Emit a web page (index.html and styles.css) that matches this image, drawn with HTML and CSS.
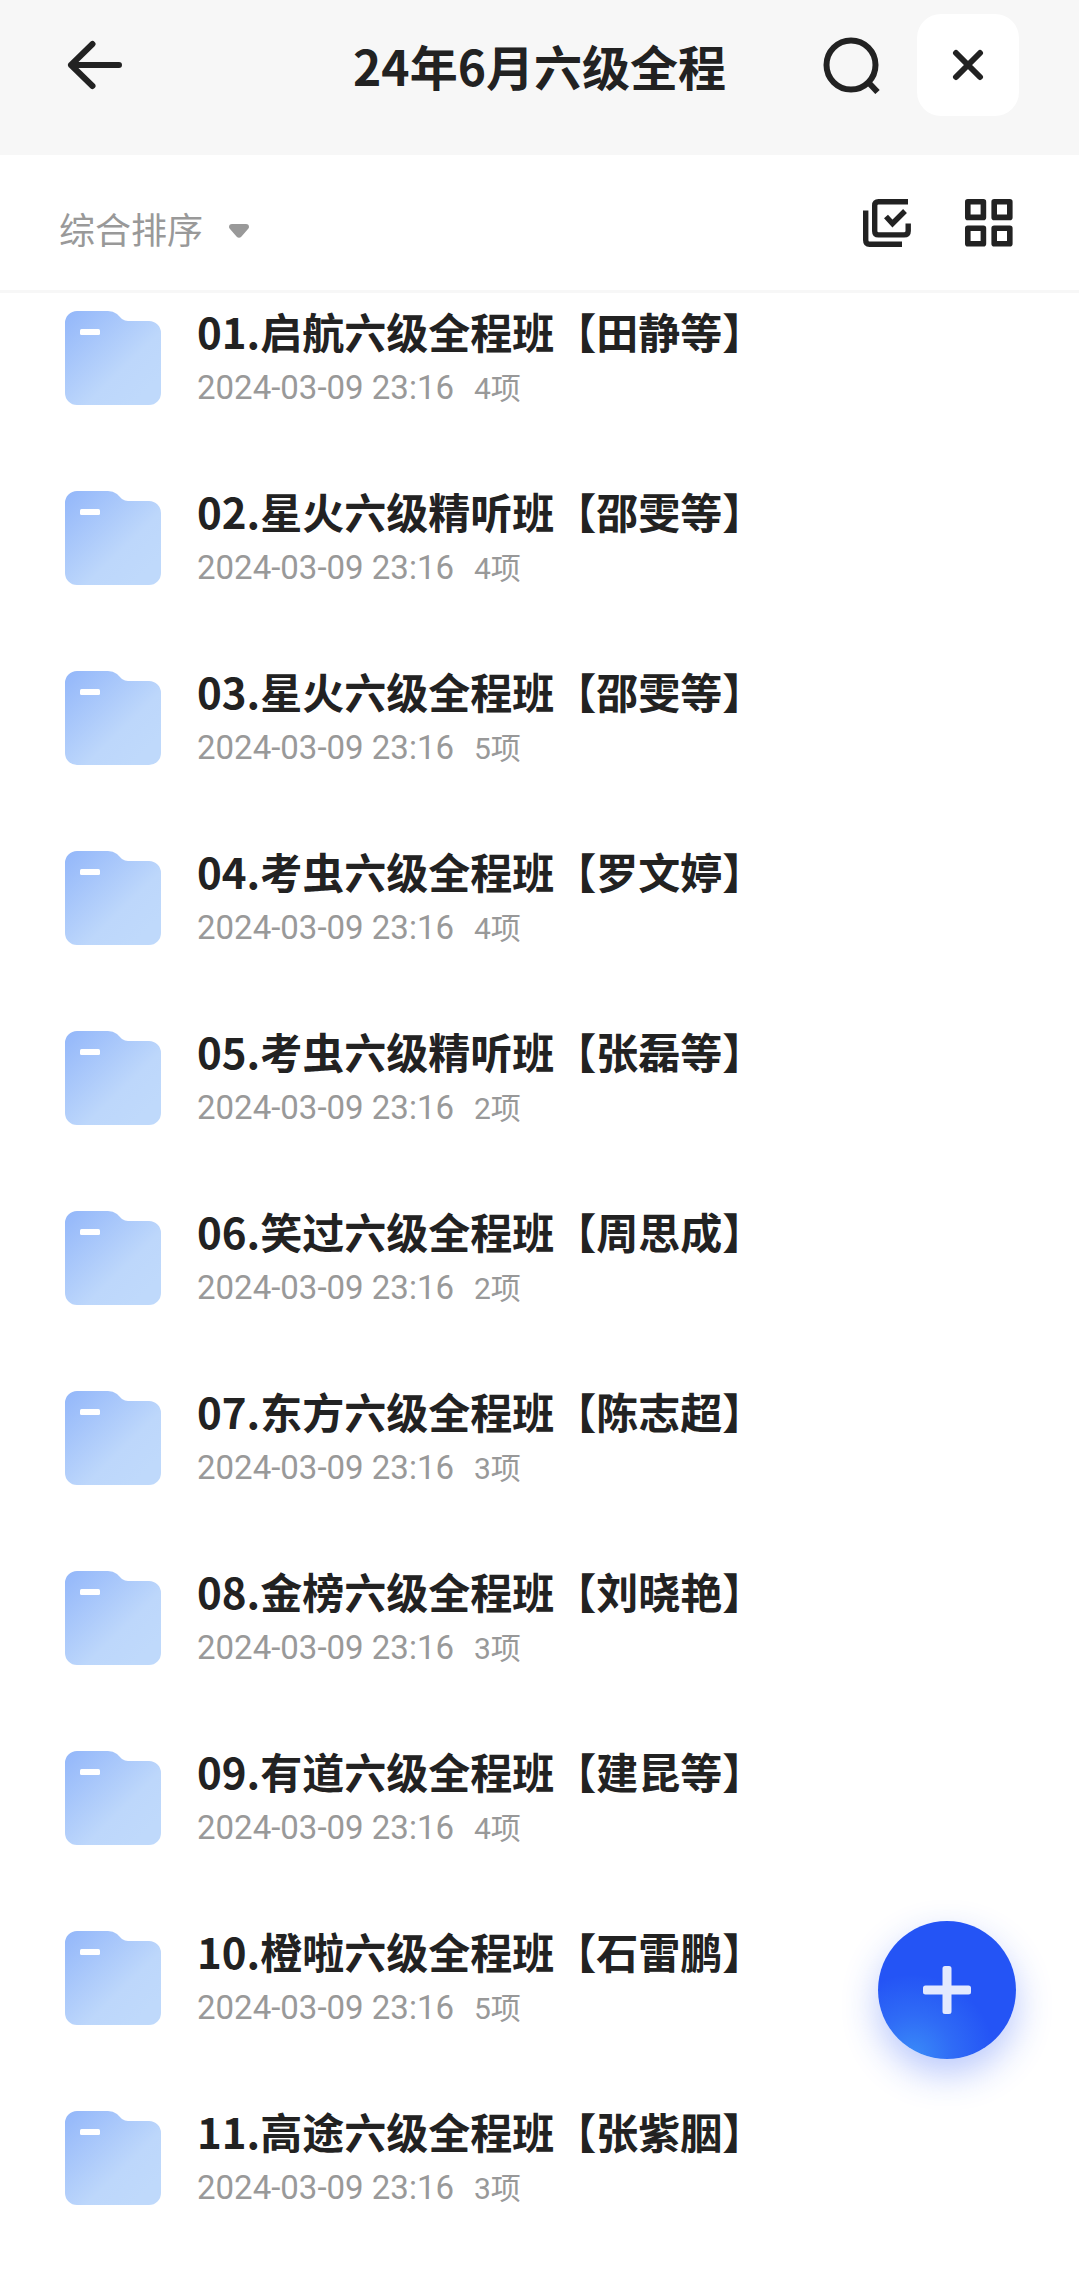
FILE: index.html
```html
<!DOCTYPE html>
<html lang="zh-CN">
<head>
    <meta charset="UTF-8">
    <meta name="viewport" content="width=device-width, initial-scale=1.0">
    <title>24年6月六级全程</title>
    <link rel="stylesheet" href="styles.css">
</head>
<body>
    <!-- folder icon shared by all rows -->
    <svg class="sprite" width="0" height="0" aria-hidden="true">
        <defs>
            <linearGradient id="folderFill" x1="0" y1="0.1" x2="0.8" y2="0.9">
                <stop offset="0" stop-color="#96b9fa"/>
                <stop offset="0.7" stop-color="#bdd7fb"/>
                <stop offset="1" stop-color="#bfd9fb"/>
            </linearGradient>
        </defs>
        <symbol id="folder" viewBox="0 0 96 94">
            <path fill="url(#folderFill)" d="M12 0H43Q48 0 52 3L57 8Q60 10 63 10H84A12 12 0 0 1 96 22V82A12 12 0 0 1 84 94H12A12 12 0 0 1 0 82V12A12 12 0 0 1 12 0Z"/>
            <rect x="15" y="18" width="20" height="6" rx="1.5" fill="#fff"/>
        </symbol>
    </svg>

    <header class="header">
        <button type="button" class="icon-button back-button" aria-label="返回">
            <svg width="56" height="50" viewBox="0 0 56 50" fill="none" stroke="#222" stroke-width="6" stroke-linecap="round" stroke-linejoin="round">
                <path d="M52 25H4M25.500 4L4 25L25.500 46"/>
            </svg>
        </button>
        <h1>24年6月六级全程</h1>
        <div class="header-actions">
            <button type="button" class="icon-button" aria-label="搜索">
                <svg width="58" height="58" viewBox="0 0 58 58" fill="none" stroke="#222" stroke-width="6">
                    <circle cx="28" cy="29" r="24.500"/>
                    <path d="M45 46L54.500 56"/>
                </svg>
            </button>
            <button type="button" class="icon-button close-button" aria-label="关闭">
                <svg width="32" height="32" viewBox="0 0 32 32" fill="none" stroke="#222" stroke-width="6" stroke-linecap="round">
                    <path d="M4 4L28 28M28 4L4 28"/>
                </svg>
            </button>
        </div>
    </header>

    <div class="toolbar">
        <label class="sort">
            <select name="sort" aria-label="排序方式">
                <option>综合排序</option>
            </select>
            <svg class="caret" width="20" height="14" viewBox="0 0 20 14" fill="#999">
                <path d="M3 0H17Q20 0 20 3Q20 4 19 5L12.500 12.500Q10 15 7.500 12.500L1 5Q0 4 0 3Q0 0 3 0Z"/>
            </svg>
        </label>
        <div class="toolbar-actions">
            <button type="button" class="icon-button" aria-label="多选">
                <svg width="48" height="48" viewBox="0 0 48 48" fill="none" stroke="#222" stroke-width="5.400">
                    <path d="M45 2.700H15.500Q11.700 2.700 11.700 6.500V32Q11.700 35.900 15.500 35.900H41Q45.200 35.900 45.200 32V24.500"/>
                    <path d="M2.700 11.500V41Q2.700 45.200 6.500 45.200H39"/>
                    <path d="M23 17.500L29.500 24.500L42 12"/>
                </svg>
            </button>
            <button type="button" class="icon-button" aria-label="网格视图">
                <svg width="48" height="48" viewBox="0 0 48 48" fill="none" stroke="#222" stroke-width="5.600" stroke-linejoin="round">
                    <rect x="2.800" y="2.800" width="15.600" height="15.600"/>
                    <rect x="29.200" y="2.800" width="15.600" height="15.600"/>
                    <rect x="2.800" y="29.200" width="15.600" height="15.600"/>
                    <rect x="29.200" y="29.200" width="15.600" height="15.600"/>
                </svg>
            </button>
        </div>
    </div>

    <main>
        <ul class="file-list">
            <li><a href="#" class="file-item">
                <svg class="folder-icon"><use href="#folder"/></svg>
                <div class="file-info">
                    <h2>01.启航六级全程班【田静等】</h2>
                    <p><span class="date">2024-03-09 23:16</span><span>4项</span></p>
                </div>
            </a></li>
            <li><a href="#" class="file-item">
                <svg class="folder-icon"><use href="#folder"/></svg>
                <div class="file-info">
                    <h2>02.星火六级精听班【邵雯等】</h2>
                    <p><span class="date">2024-03-09 23:16</span><span>4项</span></p>
                </div>
            </a></li>
            <li><a href="#" class="file-item">
                <svg class="folder-icon"><use href="#folder"/></svg>
                <div class="file-info">
                    <h2>03.星火六级全程班【邵雯等】</h2>
                    <p><span class="date">2024-03-09 23:16</span><span>5项</span></p>
                </div>
            </a></li>
            <li><a href="#" class="file-item">
                <svg class="folder-icon"><use href="#folder"/></svg>
                <div class="file-info">
                    <h2>04.考虫六级全程班【罗文婷】</h2>
                    <p><span class="date">2024-03-09 23:16</span><span>4项</span></p>
                </div>
            </a></li>
            <li><a href="#" class="file-item">
                <svg class="folder-icon"><use href="#folder"/></svg>
                <div class="file-info">
                    <h2>05.考虫六级精听班【张磊等】</h2>
                    <p><span class="date">2024-03-09 23:16</span><span>2项</span></p>
                </div>
            </a></li>
            <li><a href="#" class="file-item">
                <svg class="folder-icon"><use href="#folder"/></svg>
                <div class="file-info">
                    <h2>06.笑过六级全程班【周思成】</h2>
                    <p><span class="date">2024-03-09 23:16</span><span>2项</span></p>
                </div>
            </a></li>
            <li><a href="#" class="file-item">
                <svg class="folder-icon"><use href="#folder"/></svg>
                <div class="file-info">
                    <h2>07.东方六级全程班【陈志超】</h2>
                    <p><span class="date">2024-03-09 23:16</span><span>3项</span></p>
                </div>
            </a></li>
            <li><a href="#" class="file-item">
                <svg class="folder-icon"><use href="#folder"/></svg>
                <div class="file-info">
                    <h2>08.金榜六级全程班【刘晓艳】</h2>
                    <p><span class="date">2024-03-09 23:16</span><span>3项</span></p>
                </div>
            </a></li>
            <li><a href="#" class="file-item">
                <svg class="folder-icon"><use href="#folder"/></svg>
                <div class="file-info">
                    <h2>09.有道六级全程班【建昆等】</h2>
                    <p><span class="date">2024-03-09 23:16</span><span>4项</span></p>
                </div>
            </a></li>
            <li><a href="#" class="file-item">
                <svg class="folder-icon"><use href="#folder"/></svg>
                <div class="file-info">
                    <h2>10.橙啦六级全程班【石雷鹏】</h2>
                    <p><span class="date">2024-03-09 23:16</span><span>5项</span></p>
                </div>
            </a></li>
            <li><a href="#" class="file-item">
                <svg class="folder-icon"><use href="#folder"/></svg>
                <div class="file-info">
                    <h2>11.高途六级全程班【张紫胭】</h2>
                    <p><span class="date">2024-03-09 23:16</span><span>3项</span></p>
                </div>
            </a></li>
        </ul>
    </main>

    <button type="button" class="add-button" aria-label="新建">
        <svg width="48" height="48" viewBox="0 0 48 48" fill="#e3e9fe">
            <path d="M22 0H26Q28.500 0 28.500 2.500V19.500H45.500Q48 19.500 48 22V26Q48 28.500 45.500 28.500H28.500V45.500Q28.500 48 26 48H22Q19.500 48 19.500 45.500V28.500H2.500Q0 28.500 0 26V22Q0 19.500 2.500 19.500H19.500V2.500Q19.500 0 22 0Z"/>
        </svg>
    </button>
</body>
</html>
```

FILE: styles.css
```css
* {
    box-sizing: border-box;
}
body {
    margin: 0;
    background-color: #fff;
    color: #222;
    font-family: "Noto Sans CJK SC", sans-serif;
}
h1, h2, p, ul {
    margin: 0;
    padding: 0;
}
svg {
    display: block;
    flex-shrink: 0;
}
.sprite {
    position: absolute;
}
.icon-button {
    display: flex;
    align-items: center;
    justify-content: center;
    padding: 0;
    border: none;
    background: none;
    cursor: pointer;
}
.header {
    display: grid;
    grid-template-columns: 1fr auto 1fr;
    align-items: center;
    padding: 14px 60px 39px;
    background-color: #f7f7f7;
}
.header h1 {
    font-size: 48px;
    line-height: 64px;
    font-weight: 700;
}
.back-button {
    justify-self: start;
    padding-left: 7px;
}
.header-actions {
    display: flex;
    align-items: center;
    justify-content: flex-end;
    gap: 36px;
}
.close-button {
    width: 102px;
    height: 102px;
    border-radius: 24px;
    background-color: #fff;
}
.toolbar {
    display: flex;
    align-items: center;
    justify-content: space-between;
    padding: 36px 66px 35px 59px;
    border-bottom: 3px solid #f7f7f7;
}
.sort {
    display: flex;
    align-items: center;
    gap: 25px;
    padding-top: 10px;
}
.sort select {
    appearance: none;
    padding: 0;
    border: none;
    background: none;
    color: #999;
    font-family: inherit;
    font-size: 36px;
    line-height: 54px;
    cursor: pointer;
}
.caret {
    margin-top: 6px;
}
.toolbar-actions {
    display: flex;
    gap: 54px;
}
.file-list {
    display: flex;
    flex-direction: column;
    gap: 74px;
    padding: 12px 65px 78px;
    list-style: none;
}
.file-item {
    display: flex;
    align-items: center;
    gap: 36px;
    height: 106px;
    color: inherit;
    text-decoration: none;
}
.folder-icon {
    width: 96px;
    height: 94px;
}
.file-info h2 {
    margin-bottom: 8px;
    font-size: 42px;
    line-height: 52px;
    font-weight: 700;
}
.file-info p {
    display: flex;
    align-items: baseline;
    gap: 20px;
    color: #999;
    font-family: Roboto, "Noto Sans CJK SC", sans-serif;
    font-size: 30px;
    line-height: 46px;
}
.file-info .date {
    font-size: 33px;
}
.add-button {
    position: fixed;
    right: 63px;
    bottom: 230px;
    display: flex;
    align-items: center;
    justify-content: center;
    width: 138px;
    height: 138px;
    padding: 0;
    border: none;
    border-radius: 50%;
    background: radial-gradient(circle at 25% 98%, #3a8bf8 0, #2f6bf6 24%, #2454f5 48%);
    box-shadow: 0 15px 36px rgba(36, 84, 245, 0.32);
    cursor: pointer;
}
```
